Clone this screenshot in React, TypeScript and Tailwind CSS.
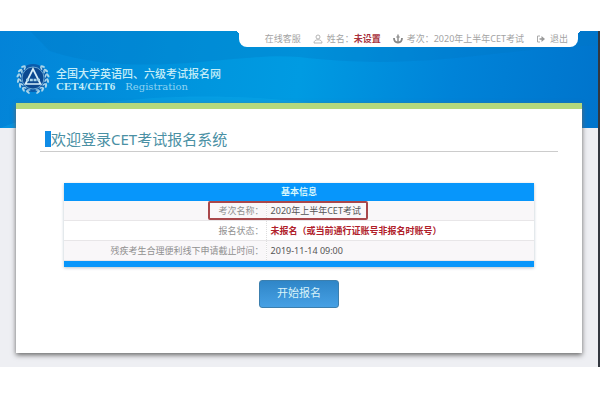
import type { ReactNode } from 'react';
import clsx from 'clsx';

interface InfoRow {
  label: string;
  value: string;
  warning?: boolean;
  marked?: boolean;
}

const rows: InfoRow[] = [
  { label: '考次名称：', value: '2020年上半年CET考试', marked: true },
  { label: '报名状态：', value: '未报名（或当前通行证账号非报名时账号）', warning: true },
  { label: '残疾考生合理便利线下申请截止时间：', value: '2019-11-14 09:00' },
];

// laurel leaves, degrees from the bottom of the emblem
const leaves = [20, 40, 60, 80, 100, 120, 140];

function Emblem() {
  return (
    <svg viewBox="0 0 34 34" className="size-[34px] shrink-0" aria-hidden="true">
      <circle cx="17" cy="17" r="14" fill="#0a5cac" />
      {[1, -1].map((side) => (
        <g key={side} transform={`translate(17 17) scale(${side} 1)`} fill="#a9d5ea">
          {leaves.map((angle) => (
            <g key={angle} transform={`rotate(${-angle})`}>
              <ellipse cx="0" cy="15" rx="2.4" ry="1.1" transform="rotate(-25 0 15)" />
              <ellipse cx="0" cy="12.8" rx="2" ry="0.8" transform="rotate(25 0 12.8)" />
            </g>
          ))}
        </g>
      ))}
      <circle cx="17" cy="17" r="11" fill="#0b4990" stroke="#7fbbe0" strokeWidth="0.8" />
      <path d="M17 8 L9.5 23 H24.5 Z" fill="none" stroke="#d8eff9" strokeWidth="1.7" />
      <path d="M10 19 H24" fill="none" stroke="#a9d5ea" strokeWidth="2.6" strokeDasharray="3 0.8" />
    </svg>
  );
}

function UserIcon() {
  return (
    <svg viewBox="0 0 10 10" className="size-[10px]" fill="none" stroke="#b5b5b5" aria-hidden="true">
      <circle cx="5" cy="3" r="2" />
      <path d="M1 9 C1 6.5 3 5.8 5 5.8 S9 6.5 9 9 Z" />
    </svg>
  );
}

function ExamIcon() {
  return (
    <svg viewBox="0 0 10 10" className="size-[10px]" fill="none" stroke="#888" aria-hidden="true">
      <path d="M5 0.5 V8.5" strokeWidth="1.4" />
      <path d="M3.2 3 H6.8" />
      <path d="M1 4 C1 7 2.5 8.5 5 8.5 S9 7 9 4" strokeWidth="1.8" />
    </svg>
  );
}

function ExitIcon() {
  return (
    <svg viewBox="0 0 10 10" className="size-[10px]" fill="none" stroke="#aaa" aria-hidden="true">
      <path d="M4 2 H1.5 V8 H4" />
      <path d="M3.5 5 H6" strokeWidth="1.8" />
      <path d="M5.5 2 L9 5 L5.5 8 Z" fill="#999" stroke="none" />
    </svg>
  );
}

function TopItem({ icon, children }: { icon?: ReactNode; children: ReactNode }) {
  return (
    <li className="flex items-center gap-1 whitespace-nowrap">
      {icon}
      {children}
    </li>
  );
}

function Header() {
  return (
    <header className="relative overflow-hidden bg-[linear-gradient(100deg,#0383d8_0%,#0096de_35%,#009be2_50%,#0083d8_75%,#0074cc_100%)] pb-[25px]">
      <svg viewBox="0 0 600 97" preserveAspectRatio="none" className="absolute inset-0 size-full" aria-hidden="true">
        <path d="M30 0 H600 V14 C480 20 420 40 300 26 C240 20 140 50 50 20 Z" fill="#0078c4" opacity="0.3" />
        <path d="M0 97 C120 50 320 60 430 97 Z" fill="#12aef0" opacity="0.3" />
      </svg>
      <nav className="relative mr-[20px] ml-[40%] h-4 rounded-b-lg bg-white text-[9px] leading-4 text-[#a3a3a3] before:absolute before:top-0 before:-left-1 before:size-1 before:bg-[radial-gradient(circle_at_0_100%,transparent_4px,white_4px)] after:absolute after:top-0 after:-right-1 after:size-1 after:bg-[radial-gradient(circle_at_100%_100%,transparent_4px,white_4px)]">
        <ul className="flex justify-end gap-3 pr-[10px]">
          <TopItem><a href="#service">在线客服</a></TopItem>
          <TopItem icon={<UserIcon />}>
            <span>姓名：<b className="text-[#a8323c]">未设置</b></span>
          </TopItem>
          <TopItem icon={<ExamIcon />}>考次：2020年上半年CET考试</TopItem>
          <TopItem icon={<ExitIcon />}><a href="#logout">退出</a></TopItem>
        </ul>
      </nav>
      <div className="relative flex items-center gap-1 pt-[14px] pb-2 pl-4 text-[#c5edf8]">
        <Emblem />
        <div className="pt-1 pl-[2px]">
          <p className="text-[11px] leading-[12px] font-medium">全国大学英语四、六级考试报名网</p>
          <p className="flex items-baseline gap-[10px] text-[11px] leading-[12px]">
            <b className="font-['Liberation_Serif',serif]">CET4/CET6</b>
            <span className="font-['DejaVu_Serif',serif] text-[10px] text-[#8fd3f2]">Registration</span>
          </p>
        </div>
      </div>
    </header>
  );
}

function InfoTable() {
  return (
    <table className="w-full table-fixed border-collapse text-[9px] leading-[19px] shadow-[0_1px_3px_#b8c4cc]">
      <colgroup>
        <col className="w-[43%]" />
        <col />
      </colgroup>
      <thead>
        <tr>
          <th colSpan={2} className="bg-[#0796fb] p-0 leading-[18px] font-bold text-[#d8f8fc]">基本信息</th>
        </tr>
      </thead>
      <tbody>
        {rows.map((row) => (
          <tr key={row.label} className="border-b border-[#e8e6e8] odd:bg-[#f9f7f9] even:bg-white">
            <th scope="row" className="border-r border-dotted border-[#ddd] p-0 pr-[2px] text-right font-normal text-[#909090]">
              {row.label}
            </th>
            <td className={clsx('relative p-0 pl-[4px]', row.warning ? 'font-bold text-[#b0202a]' : 'text-[#555]')}>
              {row.value}
              {row.marked && (
                <span className="absolute inset-y-0 -left-[59px] w-[160px] rounded-xs border-2 border-[#a9474b]" />
              )}
            </td>
          </tr>
        ))}
      </tbody>
      <tfoot>
        <tr>
          <td colSpan={2} className="h-[6px] bg-[#0796fb] p-0" />
        </tr>
      </tfoot>
    </table>
  );
}

export default function App() {
  return (
    <div className="min-h-screen bg-white pt-[31px] font-['Noto_Sans','Noto_Sans_CJK_SC',sans-serif]">
      <div className="border-r-2 border-[#33373f] bg-[#eeeff3] pb-[14px]">
        <Header />
        <main className="relative mx-4 -mt-[25px] border-t-[6px] border-[#b5d87c] bg-white px-6 pt-5 pb-[45px] shadow-[0_2px_5px_#666]">
          <h1 className="flex items-center border-b border-[#ccc] pb-[2px] pl-[5px] text-[15px] leading-5 text-[#4a90a4]">
            <span className="h-4 w-[6px] bg-[#0f8ce6]" />
            欢迎登录CET考试报名系统
          </h1>
          <div className="px-6 pt-[31px]">
            <InfoTable />
          </div>
          <div className="flex justify-center pt-[13px]">
            <button type="button" className="h-7 w-20 rounded-[3px] border border-[#3c7fae] bg-linear-to-b from-[#2f86c8] to-[#46a0e4] text-[11px] text-[#d9f3fa]">
              开始报名
            </button>
          </div>
        </main>
      </div>
    </div>
  );
}
